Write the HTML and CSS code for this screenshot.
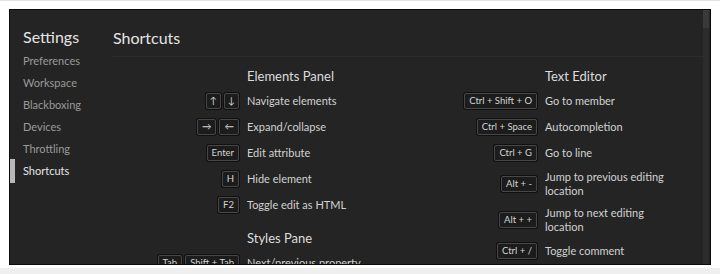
FILE: index.html
```html
<!DOCTYPE html>
<html lang="en">
<head>
<meta charset="utf-8">
<title>Settings — Shortcuts</title>
<link rel="stylesheet" href="styles.css">
</head>
<body>
<div class="frame">
  <div class="panel">
    <nav class="sidebar">
      <div class="title">Settings</div>
      <ul class="nav">
        <li class="nav-item">Preferences</li>
        <li class="nav-item">Workspace</li>
        <li class="nav-item">Blackboxing</li>
        <li class="nav-item">Devices</li>
        <li class="nav-item">Throttling</li>
        <li class="nav-item selected">Shortcuts</li>
      </ul>
    </nav>
    <main class="content">
      <header class="content-header">Shortcuts</header>
      <div class="columns">
        <section class="col col-left">
          <h3 class="section-title">Elements Panel</h3>
          <div class="row"><div class="keys"><span class="key narrow">↑</span><span class="key narrow">↓</span></div><div class="desc">Navigate elements</div></div>
          <div class="row"><div class="keys"><span class="key">→</span><span class="key">←</span></div><div class="desc">Expand/collapse</div></div>
          <div class="row"><div class="keys"><span class="key">Enter</span></div><div class="desc">Edit attribute</div></div>
          <div class="row"><div class="keys"><span class="key">H</span></div><div class="desc">Hide element</div></div>
          <div class="row"><div class="keys"><span class="key">F2</span></div><div class="desc">Toggle edit as HTML</div></div>
          <h3 class="section-title spaced">Styles Pane</h3>
          <div class="row"><div class="keys"><span class="key">Tab</span><span class="key">Shift + Tab</span></div><div class="desc">Next/previous property</div></div>
        </section>
        <section class="col col-right">
          <h3 class="section-title">Text Editor</h3>
          <div class="row"><div class="keys"><span class="key">Ctrl + Shift + O</span></div><div class="desc">Go to member</div></div>
          <div class="row"><div class="keys"><span class="key">Ctrl + Space</span></div><div class="desc">Autocompletion</div></div>
          <div class="row"><div class="keys"><span class="key">Ctrl + G</span></div><div class="desc">Go to line</div></div>
          <div class="row"><div class="keys"><span class="key">Alt + -</span></div><div class="desc">Jump to previous editing location</div></div>
          <div class="row"><div class="keys"><span class="key">Alt + +</span></div><div class="desc">Jump to next editing location</div></div>
          <div class="row"><div class="keys"><span class="key">Ctrl + /</span></div><div class="desc">Toggle comment</div></div>
        </section>
      </div>
    </main>
    <div class="scrollbar"><div class="thumb"></div></div>
  </div>
</div>
</body>
</html>
```
FILE: styles.css
```css
* { box-sizing: border-box; }
html, body { margin: 0; padding: 0; }
body {
  background: #efefef;
  font-family: Lato, "Liberation Sans", sans-serif;
  width: 720px;
  height: 274px;
  overflow: hidden;
}
.frame {
  background: #ffffff;
  border-top: 1px solid #e3e3e3;
  padding: 8px 9px 3px 9px;
  height: 268px;
}
.panel {
  width: 702px;
  height: 256px;
  background: #242424;
  border: 1px solid #0c0c0c;
  display: flex;
  overflow: hidden;
}
.sidebar {
  width: 90px;
  flex: none;
  padding-top: 17px;
}
.title {
  font-size: 16px;
  line-height: 20px;
  color: #e4e4e4;
  padding-left: 13px;
  margin-bottom: 3px;
}
.nav {
  list-style: none;
  margin: 0;
  padding: 0;
}
.nav-item {
  font-size: 11px;
  line-height: 22px;
  height: 22px;
  color: #9a9a9a;
  padding-left: 13px;
}
.nav-item.selected {
  color: #e6e6e6;
  border-left: 5px solid #b8b8b8;
  padding-left: 8px;
  height: 24px;
  line-height: 24px;
  margin-top: -1px;
}
.content {
  flex: 1;
  min-width: 0;
  overflow: hidden;
  padding-left: 13px;
}
.content-header {
  font-size: 16px;
  line-height: 20px;
  color: #e4e4e4;
  padding-top: 18px;
  padding-bottom: 8px;
  border-bottom: 1px solid #2b2b2b;
}
.columns {
  display: flex;
  padding-left: 36px;
  margin-top: 10px;
}
.col {
  display: grid;
  grid-template-columns: 90px minmax(0, 1fr);
  column-gap: 8px;
  row-gap: 8px;
  align-content: start;
}
.col-left { width: 298px; }
.col-right { width: 223px; }
.section-title {
  grid-column: 2;
  margin: 0 0 -1px 0;
  font-weight: normal;
  font-size: 13px;
  line-height: 18px;
  color: #dcdcdc;
}
.section-title.spaced { margin-top: 7px; }
.row {
  display: contents;
}
.keys {
  display: flex;
  justify-content: flex-end;
  align-items: center;
  gap: 3px;
  min-height: 18px;
}
.desc {
  display: flex;
  align-items: center;
  font-size: 11px;
  line-height: 14px;
  color: #d2d2d2;
  min-height: 18px;
}
.key {
  display: inline-flex;
  align-items: center;
  height: 16px;
  padding: 0 4px;
  font-size: 9.5px;
  line-height: 14px;
  color: #d4d4d4;
  background: #1c1c1c;
  border: 1px solid #474747;
  border-radius: 2px;
  box-shadow: 0 0 0 1px #101010;
  white-space: nowrap;
}
.key.narrow { padding: 0 3px; }
.scrollbar {
  width: 6px;
  flex: none;
  margin-right: 1px;
  background: #2c2c2c;
  display: flex;
  flex-direction: column;
}
.thumb {
  height: 18px;
  background: #3a3a3a;
}
```
